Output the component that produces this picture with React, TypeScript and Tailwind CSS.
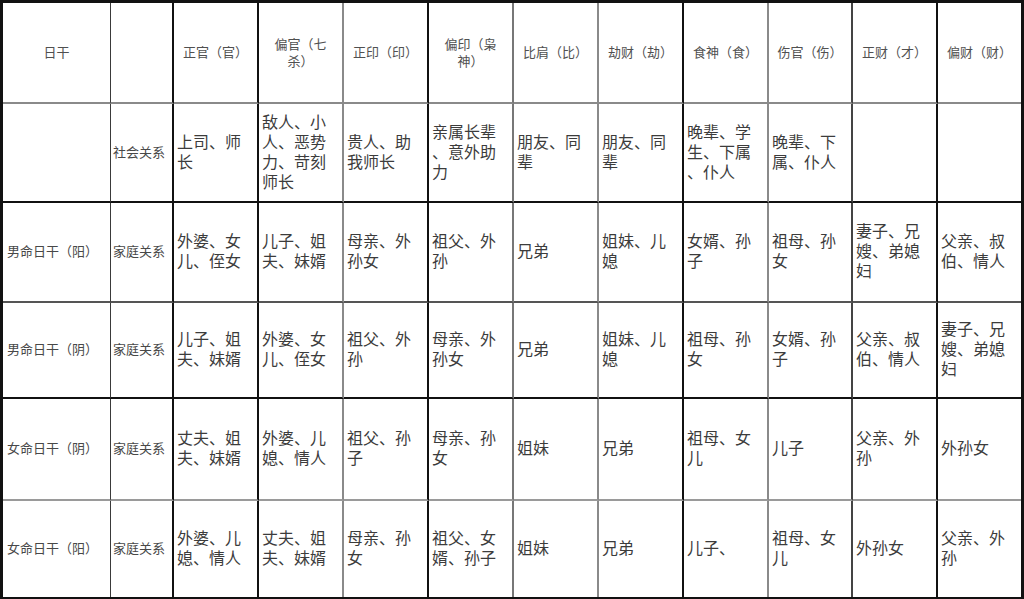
import React from 'react';

// 十神六亲对照表
const headers: string[][] = [
  ['日干'],
  [],
  ['正官（官）'],
  ['偏官（七', '杀）'],
  ['正印（印）'],
  ['偏印（枭', '神）'],
  ['比肩（比）'],
  ['劫财（劫）'],
  ['食神（食）'],
  ['伤官（伤）'],
  ['正财（才）'],
  ['偏财（财）'],
];

const rows: { label: string; kind: string; cells: string[][] }[] = [
  {
    label: '',
    kind: '社会关系',
    cells: [
      ['上司、师', '长'],
      ['敌人、小', '人、恶势', '力、苛刻', '师长'],
      ['贵人、助', '我师长'],
      ['亲属长辈', '、意外助', '力'],
      ['朋友、同', '辈'],
      ['朋友、同', '辈'],
      ['晚辈、学', '生、下属', '、仆人'],
      ['晚辈、下', '属、仆人'],
      [],
      [],
    ],
  },
  {
    label: '男命日干（阳）',
    kind: '家庭关系',
    cells: [
      ['外婆、女', '儿、侄女'],
      ['儿子、姐', '夫、妹婿'],
      ['母亲、外', '孙女'],
      ['祖父、外', '孙'],
      ['兄弟'],
      ['姐妹、儿', '媳'],
      ['女婿、孙', '子'],
      ['祖母、孙', '女'],
      ['妻子、兄', '嫂、弟媳', '妇'],
      ['父亲、叔', '伯、情人'],
    ],
  },
  {
    label: '男命日干（阴）',
    kind: '家庭关系',
    cells: [
      ['儿子、姐', '夫、妹婿'],
      ['外婆、女', '儿、侄女'],
      ['祖父、外', '孙'],
      ['母亲、外', '孙女'],
      ['兄弟'],
      ['姐妹、儿', '媳'],
      ['祖母、孙', '女'],
      ['女婿、孙', '子'],
      ['父亲、叔', '伯、情人'],
      ['妻子、兄', '嫂、弟媳', '妇'],
    ],
  },
  {
    label: '女命日干（阴）',
    kind: '家庭关系',
    cells: [
      ['丈夫、姐', '夫、妹婿'],
      ['外婆、儿', '媳、情人'],
      ['祖父、孙', '子'],
      ['母亲、孙', '女'],
      ['姐妹'],
      ['兄弟'],
      ['祖母、女', '儿'],
      ['儿子'],
      ['父亲、外', '孙'],
      ['外孙女'],
    ],
  },
  {
    label: '女命日干（阳）',
    kind: '家庭关系',
    cells: [
      ['外婆、儿', '媳、情人'],
      ['丈夫、姐', '夫、妹婿'],
      ['母亲、孙', '女'],
      ['祖父、女', '婿、孙子'],
      ['姐妹'],
      ['兄弟'],
      ['儿子、'],
      ['祖母、女', '儿'],
      ['外孙女'],
      ['父亲、外', '孙'],
    ],
  },
];

// right border of each column, bottom border of each row
const colRight = [
  'border-r border-r-[#3a3a3a]',
  'border-r-2 border-r-[#111]',
  'border-r-2 border-r-[#111]',
  'border-r-2 border-r-[#8a8a8a]',
  'border-r-2 border-r-[#111]',
  'border-r-2 border-r-[#777]',
  'border-r-2 border-r-[#8a8a8a]',
  'border-r-2 border-r-[#111]',
  'border-r-2 border-r-[#8a8a8a]',
  'border-r-2 border-r-[#444]',
  'border-r-2 border-r-[#111]',
  '',
];

const rowBottom = [
  'border-b-2 border-b-[#8a8a8a]',
  'border-b-2 border-b-[#111]',
  'border-b-2 border-b-[#555]',
  'border-b-2 border-b-[#111]',
  'border-b-2 border-b-[#9a9a9a]',
  '',
];

function Lines({ lines }: { lines: string[] }) {
  return (
    <div>
      {lines.map((l, i) => (
        <div key={i} className="whitespace-nowrap">
          {l}
        </div>
      ))}
    </div>
  );
}

export default function App() {
  return (
    <div
      className="w-[1024px] h-[599px] bg-white border-t-[3px] border-l-[3px] border-r-[3px] border-b-2 border-[#111] overflow-hidden"
      style={{ fontFamily: '"Liberation Serif", "Noto Sans CJK SC", serif' }}
    >
      <div className="grid grid-cols-[108px_63px_85px_85px_85px_85px_85px_85px_85px_84px_85px_83px] grid-rows-[101px_99px_100px_96px_102px_96px]">
        {headers.map((h, c) => (
          <div
            key={'h' + c}
            className={`flex items-center justify-center text-center text-[13px] leading-[17px] text-[#505050] ${colRight[c]} ${rowBottom[0]}`}
          >
            <Lines lines={h} />
          </div>
        ))}

        {rows.map((row, r) => (
          <React.Fragment key={r}>
            <div
              className={`flex items-center pl-1 text-[13px] text-[#484848] ${colRight[0]} ${rowBottom[r + 1]}`}
            >
              <span className="whitespace-nowrap">{row.label}</span>
            </div>
            <div
              className={`flex items-center pl-[2px] text-[13px] text-[#484848] ${colRight[1]} ${rowBottom[r + 1]}`}
            >
              <span className="whitespace-nowrap">{row.kind}</span>
            </div>
            {row.cells.map((cell, c) => (
              <div
                key={c}
                className={`flex items-center pl-[3px] text-[16px] leading-[20px] text-[#3c3c3c] ${colRight[c + 2]} ${rowBottom[r + 1]}`}
              >
                <Lines lines={cell} />
              </div>
            ))}
          </React.Fragment>
        ))}
      </div>
    </div>
  );
}
